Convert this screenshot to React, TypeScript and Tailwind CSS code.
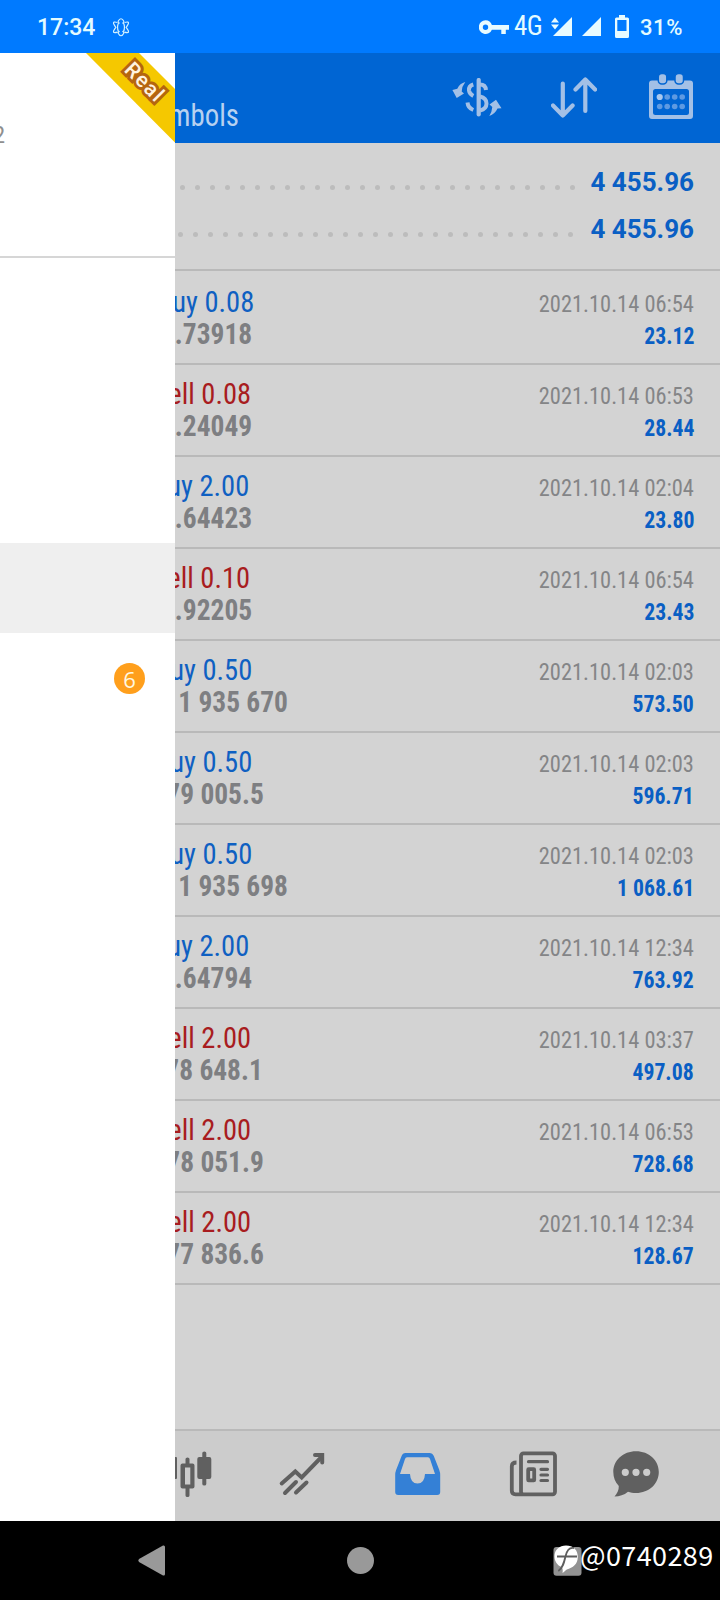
type Deal = {
  action: string;
  actionW: string;
  side: 'buy' | 'sell';
  price: string;
  priceW: string;
  time: string;
  profit: string;
};

const deals: Deal[] = [
  { action: 'uy 0.08', actionW: 'w-[79px]', side: 'buy', price: '.73918', priceW: 'w-[77px]', time: '2021.10.14 06:54', profit: '23.12' },
  { action: 'ell 0.08', actionW: 'w-[76px]', side: 'sell', price: '.24049', priceW: 'w-[77px]', time: '2021.10.14 06:53', profit: '28.44' },
  { action: 'uy 2.00', actionW: 'w-[74px]', side: 'buy', price: '.64423', priceW: 'w-[77px]', time: '2021.10.14 02:04', profit: '23.80' },
  { action: 'ell 0.10', actionW: 'w-[75px]', side: 'sell', price: '.92205', priceW: 'w-[77px]', time: '2021.10.14 06:54', profit: '23.43' },
  { action: 'uy 0.50', actionW: 'w-[77px]', side: 'buy', price: '1 935 670', priceW: 'w-[113px]', time: '2021.10.14 02:03', profit: '573.50' },
  { action: 'uy 0.50', actionW: 'w-[77px]', side: 'buy', price: '79 005.5', priceW: 'w-[89px]', time: '2021.10.14 02:03', profit: '596.71' },
  { action: 'uy 0.50', actionW: 'w-[77px]', side: 'buy', price: '1 935 698', priceW: 'w-[113px]', time: '2021.10.14 02:03', profit: '1 068.61' },
  { action: 'uy 2.00', actionW: 'w-[74px]', side: 'buy', price: '.64794', priceW: 'w-[77px]', time: '2021.10.14 12:34', profit: '763.92' },
  { action: 'ell 2.00', actionW: 'w-[76px]', side: 'sell', price: '78 648.1', priceW: 'w-[88px]', time: '2021.10.14 03:37', profit: '497.08' },
  { action: 'ell 2.00', actionW: 'w-[76px]', side: 'sell', price: '78 051.9', priceW: 'w-[89px]', time: '2021.10.14 06:53', profit: '728.68' },
  { action: 'ell 2.00', actionW: 'w-[76px]', side: 'sell', price: '77 836.6', priceW: 'w-[89px]', time: '2021.10.14 12:34', profit: '128.67' },
];

const dots = Array.from({ length: 27 }, (_, i) => i);

function StatusBar() {
  return (
    <div className="flex h-[53px] items-center bg-[#007aff] pl-[37px] font-['Roboto'] text-[22px] font-medium text-[#e4fbff]">
      <span className="w-[75px] pt-[2px] text-[23px] leading-none">17:34</span>
      <svg className="h-5 w-[18px]" viewBox="112 16 18 20" fill="none" stroke="#d4f2ff" strokeWidth="1.200">
        <path d="M118 20.500q3-5.500 6 0M118 32q3 5.500 6 0M118.500 22q-2 4.300 0 8.600M123.500 22q2 4.300 0 8.600M117.500 21.500q-5-1.500-3.700 1.500 1 2 2 3.300-1 1.300-2 3.300-1.300 3 3.700 1.500M124.500 21.500q5-1.500 3.700 1.500-1 2-2 3.300 1 1.300 2 3.300 1.300 3-3.700 1.500M118 20.500l1.500 2M124 20.500l-1.500 2M118 32l1.500-2M124 32l-1.500-2" />
      </svg>
      <svg className="ml-[349px] h-[14px] w-[30px]" viewBox="479 19 30 14" fill="#e8fbff">
        <path fillRule="evenodd" d="M485.500 19.300a6.800 6.800 0 0 1 6.400 4.700H509v4.700h-3.200V33h-4.500v-4.300h-9.400a6.800 6.800 0 1 1-6.400-9.400zm0 4.300a2.700 2.700 0 1 0 0 5.400 2.700 2.700 0 0 0 0-5.400z" />
      </svg>
      <span className="ml-[5px] w-[28px] font-['Roboto_Condensed'] text-[27px] font-normal leading-none tracking-[-0.5px]">4G</span>
      <svg className="ml-[8px] h-[20px] w-[22px]" viewBox="550 17 22 20" fill="#e8fbff">
        <path d="M572 17v19h-19zM551 22.500l4-5 4 5zM551 24.500h8l-4 5z" />
      </svg>
      <svg className="ml-[10px] h-[20px] w-[20px]" viewBox="582 17 20 20" fill="#e8fbff">
        <path d="M601 17v19h-19z" />
      </svg>
      <svg className="ml-[12px] h-6 w-[16px]" viewBox="614 15 16 24" fill="#e8fbff">
        <path fillRule="evenodd" d="M619 15h6v2.500h2.500q1.500 0 1.500 1.500v17.500q0 1.500-1.500 1.500h-11q-1.500 0-1.500-1.500V19q0-1.500 1.500-1.500h2.500zM617.300 20v11h9.200V20z" />
      </svg>
      <span className="ml-[10px] pt-[2px] text-[22px] leading-none tracking-[0.6px]">31%</span>
    </div>
  );
}

function Drawer() {
  return (
    <aside className="relative flex h-full w-[175px] shrink-0 flex-col overflow-hidden bg-white font-['Roboto']">
      <div className="flex h-[205px] items-start border-b-2 border-[#d6d6d6] pt-[68px]">
        <div className="flex h-7 w-[5px] justify-end overflow-hidden font-['Roboto_Condensed'] text-[24px] leading-7 text-[#8f8f8f]">2</div>
      </div>
      <div className="mt-[285px] h-[90px] bg-[#efefef]" />
      <div className="flex h-[91px] items-center pl-[114px]">
        <div className="flex h-[31px] w-[31px] items-center justify-center rounded-full bg-[#ff9f1c] font-['Open_Sans'] text-[22px] leading-none text-[#fff8e0]">6</div>
      </div>
      <svg className="absolute right-0 top-0 h-[90px] w-[90px]" viewBox="0 0 90 90">
        <path d="M1 0H54L90 36V89.500z" fill="#f5c800" />
      </svg>
      <span className="absolute left-[114px] top-[18px] flex h-6 w-[60px] rotate-45 items-center justify-center font-['Roboto'] text-[21px] font-medium tracking-[1.3px] text-[#fff3e0] [-webkit-text-stroke:6px_#b5650f] [paint-order:stroke_fill] [stroke-linejoin:round]">
        Real
      </span>
    </aside>
  );
}

function Header() {
  return (
    <header className="flex h-[90px] shrink-0 bg-[#0065d3]">
      <div className="flex h-full w-[64px] items-end justify-end overflow-hidden pb-[10px]">
        <span className="origin-right scale-x-[0.9] font-['Roboto_Condensed'] text-[32px] leading-[36px] text-[#b7d1f0]">mbols</span>
      </div>
      <svg className="ml-[213px] mt-[25px] h-[40px] w-[50px]" viewBox="452 78 50 40" fill="none" stroke="#a3c0e6" strokeWidth="4">
        <path d="M478.700 80V114.500" strokeWidth="4.200" strokeLinecap="round" />
        <path d="M473.300 84.500q-4.800 1.500-4.300 6 .5 3.500 4.300 5.500M467.500 102.500q.5 5.500 5.800 7.500" />
        <path d="M480 84.500q5.500 0 6 5.500M480 96.500q6.500 1.500 6.500 7t-6.500 7" />
        <path d="M465.300 82q-5.500 1.300-8 6.800l-4.900 1.200 4.300 8 7.300-4.500-2.300-2q.2-5.200 3.600-9.500zM489.300 116q2.700-4.300 3-9l-2.800-2.500 6.500-4.800 5.500 8.600-4 .2q-2.500 5.500-8.200 7.500z" fill="#a3c0e6" stroke="none" />
      </svg>
      <svg className="ml-[49px] mt-[24px] h-[42px] w-[46px]" viewBox="551 77 46 42" fill="none" stroke="#a3c0e6" strokeWidth="4.200" strokeLinecap="round" strokeLinejoin="round">
        <path d="M562.800 83.500V115.500M553 105.500l9.800 10 9.800-10M585.300 111V79.500M575.500 89.500l9.800-10 9.800 10" />
      </svg>
      <svg className="ml-[51px] mt-[20px] h-[48px] w-[46px]" viewBox="648 73 46 48">
        <path fillRule="evenodd" fill="#a3c0e6" d="M652 80.500h38q3 0 3 3v32.500q0 3-3 3h-38q-3 0-3-3V83.500q0-3 3-3zm3.500 8.500q-2.500 0-2.500 2.500v21q0 2.500 2.500 2.500h31q2.500 0 2.500-2.500v-21q0-2.500-2.500-2.500z" />
        <g fill="#a3c0e6" stroke="#0065d3" strokeWidth="1.500">
          <rect x="658.300" y="73.500" width="8.500" height="10.500" rx="3.500" />
          <rect x="675" y="73.500" width="8.500" height="10.500" rx="3.500" />
        </g>
        <circle cx="659.700" cy="97" r="3.100" fill="#a9c8ee" />
        <g fill="#5e9ae2">
          <circle cx="667.200" cy="97" r="2.800" />
          <circle cx="674.700" cy="97" r="2.800" />
          <circle cx="682.200" cy="97" r="2.800" />
          <circle cx="659.700" cy="106.500" r="2.800" />
          <circle cx="667.200" cy="106.500" r="2.800" />
          <circle cx="674.700" cy="106.500" r="2.800" />
          <circle cx="682.200" cy="106.500" r="2.800" />
        </g>
      </svg>
    </header>
  );
}

function SummaryRow({ shift }: { shift: string }) {
  return (
    <div className="flex h-[47px] items-center justify-between pr-[26px]">
      <div className={`flex gap-[10px] pt-[12px] ${shift}`}>
        {dots.map((i) => (
          <i key={i} className="h-[5px] w-[5px] rounded-full bg-[#bcbcbc]" />
        ))}
      </div>
      <b className="font-['Roboto'] text-[26px] font-bold leading-[30px] text-[#0a5fc4]">4 455.96</b>
    </div>
  );
}

function DealRow({ deal, first }: { deal: Deal; first: boolean }) {
  return (
    <li className={`border-b-2 border-[#b9b9b9] pb-[13px] font-['Roboto_Condensed'] ${first ? 'pt-[15px]' : 'pt-[13px]'}`}>
      <div className="flex h-8 items-baseline justify-between pr-[26px] leading-8">
        <div className={`flex h-9 justify-end overflow-hidden text-[30px] ${deal.actionW}`}>
          <span className={`origin-right scale-x-[0.95] whitespace-pre ${deal.side === 'buy' ? 'text-[#0f60c2]' : 'text-[#a81c20]'}`}>{deal.action}</span>
        </div>
        <span className="origin-right scale-x-[0.935] text-[24px] text-[#848587]">{deal.time}</span>
      </div>
      <div className="flex h-8 items-baseline justify-between pr-[26px] font-bold leading-8">
        <div className={`flex h-9 justify-end overflow-hidden text-[29.500px] ${deal.priceW}`}>
          <span className="origin-right scale-x-[0.93] whitespace-pre text-[#7e7f82]">{deal.price}</span>
        </div>
        <span className="origin-right scale-x-[0.905] text-[24px] text-[#0a5fc4]">{deal.profit}</span>
      </div>
    </li>
  );
}

function TabBar() {
  return (
    <nav className="flex h-[92px] shrink-0 items-start border-t-2 border-[#b9b9b9] bg-[#cccccc] pt-[18px]">
      <svg className="h-[52px] w-[38px]" viewBox="175 1449 38 52" fill="#606060">
        <rect x="170" y="1457" width="7" height="22" rx="1" />
        <path fillRule="evenodd" d="M185.500 1459q0-1.500 2-1.500t2 1.500v4.500h3q2 0 2 2v21q0 2-2 2h-3v7q0 1.500-2 1.500t-2-1.500v-7h-3q-2 0-2-2v-21q0-2 2-2h3zM185 1467.500v17h5.300v-17z" />
        <path d="M202.300 1453q0-1.500 2-1.500t2 1.500v4h3q2 0 2 2v18q0 2-2 2h-3v5q0 1.500-2 1.500t-2-1.500v-5h-3q-2 0-2-2v-18q0-2 2-2h3z" />
      </svg>
      <svg className="ml-[65px] h-[48px] w-[48px]" viewBox="278 1449 48 48" fill="none" stroke="#606060" strokeWidth="4" strokeLinecap="round">
        <path d="M281.700 1483.500l13.600-12 6.400 6 20.300-21" strokeLinejoin="miter" />
        <path d="M315 1455h7.200v7.500" />
        <path d="M285 1493l11-11M296 1492.500l10.500-10" />
      </svg>
      <svg className="ml-[67px] h-[48px] w-[50px]" viewBox="393 1449 50 48" fill="#3480d6">
        <path fillRule="evenodd" d="M405.500 1453h24q3 0 4.300 3l5.500 14q.9 2.500.9 5v17q0 3-3 3h-39q-3 0-3-3v-17q0-2.500.9-5l5.500-14q1-3 3.900-3zm1.500 4.300q-1.500 0-2 1.700l-5 15h10q.500 9.500 7.500 9.500t7.500-9.500h10l-5-15q-.5-1.700-2-1.700z" />
      </svg>
      <svg className="ml-[65px] h-[50px] w-[50px]" viewBox="508 1449 50 50" fill="none" stroke="#606060" strokeWidth="3.800">
        <rect x="521" y="1453.300" width="34" height="41" rx="2.500" />
        <path d="M516.500 1462.500q-4.700 0-4.700 4v24q0 3.800 3.800 3.800h7" />
        <path d="M528.500 1461.700h19M541 1469.300h6.500M541 1475h6.500M541 1480.500h6.500" strokeLinecap="round" strokeWidth="3.200" />
        <rect x="528.200" y="1469.200" width="6" height="11.200" rx=".5" />
      </svg>
      <svg className="ml-[54px] h-[50px] w-[50px]" viewBox="612 1449 50 50" fill="#606060">
        <path fillRule="evenodd" d="M636 1451.300c13 0 22.800 9 22.800 20.700s-9.800 21-22.800 21c-3 0-5.500-.5-8-1.300-4 3.300-8.500 4.700-13.500 4.800 2.500-3 4.500-6.500 4.300-10.500-3.500-3.600-5.500-8.500-5.500-14 0-11.700 9.800-20.700 22.700-20.700zm-10.700 17.400a3.600 3.600 0 1 0 0 7.200 3.600 3.600 0 0 0 0-7.200zm10.700 0a3.600 3.600 0 1 0 0 7.200 3.600 3.600 0 0 0 0-7.200zm10.700 0a3.600 3.600 0 1 0 0 7.200 3.600 3.600 0 0 0 0-7.200z" />
      </svg>
    </nav>
  );
}

function SystemNav() {
  return (
    <div className="flex h-[79px] items-center bg-black">
      <svg className="ml-[137px] h-[32px] w-[29px]" viewBox="137 1545 29 32" fill="#999999">
        <path d="M139 1559l24-13.500q2-.5 2 1.500v27q0 2-2 1.500l-24-13.500q-1.500-1.500 0-3z" />
      </svg>
      <div className="ml-[181px] h-[27px] w-[27px] rounded-full bg-[#999999]" />
      <svg className="ml-[179px] h-[32px] w-[29px]" viewBox="553 1544 29 32">
        <rect x="553.500" y="1546" width="28" height="28.700" rx="3" fill="#929292" />
        <path d="M566 1544.500c7.500 0 11.800 4.500 11.800 11.500 0 7.500-5 10.500-11 12.500-1.500.7-2 2-4.300 3.500.5-3 .3-4.500-1-6-4-1.500-7-5.500-7-10.500 0-7 5-11 11.500-11z" fill="#fff" />
        <path d="M574 1547c-4.500-1-7 2-8.400 8-1.600 7-3 12.500-7.300 15M557 1555.500h20" stroke="#5e5e5e" strokeWidth="1.800" fill="none" />
      </svg>
      <span className="-ml-[2px] -mt-[12px] font-['Noto_Sans_CJK_SC'] text-[27px] leading-none tracking-[0.4px] text-white">@0740289</span>
    </div>
  );
}

export default function App() {
  return (
    <div className="flex h-[1600px] w-[720px] flex-col overflow-hidden bg-[#d3d3d3]">
      <StatusBar />
      <div className="flex h-[1468px]">
        <Drawer />
        <main className="flex min-w-0 flex-1 flex-col overflow-hidden bg-[#d3d3d3]">
          <Header />
          <section className="h-[128px] shrink-0 border-b-2 border-[#b9b9b9] pt-[15px]">
            <SummaryRow shift="pl-[5px]" />
            <SummaryRow shift="pl-[3px]" />
          </section>
          <ul className="flex-1">
            {deals.map((deal, i) => (
              <DealRow key={i} deal={deal} first={i === 0} />
            ))}
          </ul>
          <TabBar />
        </main>
      </div>
      <SystemNav />
    </div>
  );
}
